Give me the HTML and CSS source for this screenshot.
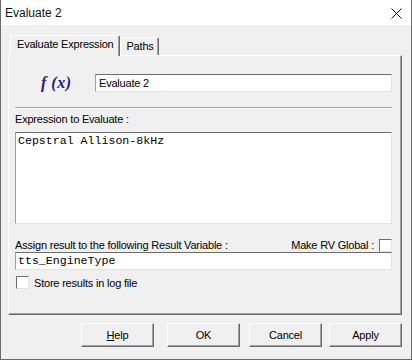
FILE: index.html
```html
<!DOCTYPE html>
<html>
<head>
  <meta charset="utf-8">
  <title>Evaluate 2</title>
  <link rel="stylesheet" href="styles.css">
</head>
<body>
  <div class="window">
    <div class="titlebar">
      <span class="title">Evaluate 2</span>
      <svg class="close" width="11" height="11" viewBox="0 0 11 11">
        <path d="M0.5 0.5 L10.5 10.5 M10.5 0.5 L0.5 10.5" stroke="#111" stroke-width="1" fill="none"/>
      </svg>
    </div>
    <div class="content">
      <div class="tabs">
        <div class="tab active">Evaluate Expression</div>
        <div class="tab">Paths</div>
      </div>
      <div class="panel">
        <div class="name-row">
          <span class="fx">f (x)</span>
          <div class="field name-field">Evaluate 2</div>
        </div>
        <div class="separator"></div>
        <div class="label">Expression to Evaluate :</div>
        <div class="field mono expr">Cepstral Allison-8kHz</div>
        <div class="label-row">
          <span class="label">Assign result to the following Result Variable :</span>
          <span class="global">Make RV Global : <span class="check"></span></span>
        </div>
        <div class="field mono var">tts_EngineType</div>
        <div class="store">
          <span class="check"></span>
          <span class="label">Store results in log file</span>
        </div>
      </div>
      <div class="buttons">
        <div class="button help"><u>H</u>elp</div>
        <div class="button ok">OK</div>
        <div class="button cancel">Cancel</div>
        <div class="button apply">Apply</div>
      </div>
    </div>
  </div>
</body>
</html>
```

FILE: styles.css
```css
body {
    margin: 0;
    background-color: #f0f0f0;
    font-family: "Liberation Sans", Arial, sans-serif;
    font-size: 11px;
    letter-spacing: -0.2px;
    color: #000;
}
.window {
    width: 412px;
    height: 360px;
    box-sizing: border-box;
    border: 1px solid #6a6a6a;
    border-top: none;
    background-color: #f0f0f0;
}
.titlebar {
    height: 25px;
    background-color: #fff;
    display: flex;
    align-items: center;
    justify-content: space-between;
    padding: 0 9px 0 4px;
}
.title {
    font-size: 12px;
    letter-spacing: 0;
    color: #111;
}
.close { margin-top: 1px; }
.content {
    padding: 9px 9px 0 7px;
}
.tabs {
    display: flex;
    align-items: flex-end;
    padding-left: 2px;
    height: 21px;
    position: relative;
    z-index: 1;
}
.tab {
    height: 17px;
    padding: 0 4px 0 5px;
    border-top: 1px solid #fff;
    border-left: 1px solid #fff;
    border-right: 1px solid #6a6a6a;
    box-shadow: inset -1px 0 #a0a0a0;
    border-radius: 2px 2px 0 0;
    line-height: 17px;
    background-color: #f0f0f0;
}
.tab.active {
    height: 20px;
    padding: 0 6px 0 6px;
    line-height: 17px;
    margin-bottom: -1px;
}
.panel {
    height: 260px;
    box-sizing: border-box;
    border-top: 1px solid #fff;
    border-left: 1px solid #fff;
    border-right: 1px solid #6a6a6a;
    border-bottom: 1px solid #6a6a6a;
    box-shadow: inset -1px -1px #a0a0a0;
    padding: 18px 9px 0 6px;
    display: flex;
    flex-direction: column;
}
.name-row {
    display: flex;
    align-items: center;
    height: 18px;
}
.fx {
    font-family: "Liberation Serif", "Times New Roman", serif;
    font-weight: bold;
    font-style: italic;
    font-size: 16px;
    color: #20207a;
    width: 80px;
    padding-left: 26px;
    box-sizing: border-box;
    letter-spacing: 0.5px;
}
.field {
    background-color: #fff;
    border-top: 1px solid #6d6d6d;
    border-left: 1px solid #a0a0a0;
    border-right: 1px solid #e3e3e3;
    border-bottom: 1px solid #e3e3e3;
    box-sizing: border-box;
}
.name-field {
    flex: 1;
    height: 18px;
    line-height: 16px;
    padding-left: 3px;
}
.separator {
    margin-top: 15px;
    height: 1px;
    background-color: #a0a0a0;
    border-bottom: 1px solid #fff;
}
.label {
    white-space: nowrap;
}
.panel > .label {
    margin-top: 4px;
    line-height: 13px;
}
.mono {
    font-family: "Liberation Mono", "Courier New", monospace;
    font-size: 11.6px;
    letter-spacing: 0;
    color: #000;
    padding-left: 2px;
}
.expr {
    margin-top: 6px;
    height: 92px;
    line-height: 16px;
}
.label-row {
    margin-top: 14px;
    display: flex;
    justify-content: space-between;
    align-items: center;
    height: 14px;
}
.global {
    display: flex;
    align-items: center;
    gap: 5px;
}
.check {
    display: inline-block;
    width: 13px;
    height: 13px;
    box-sizing: border-box;
    background-color: #fff;
    border-top: 1px solid #6d6d6d;
    border-left: 1px solid #6d6d6d;
    border-right: 1px solid #e3e3e3;
    border-bottom: 1px solid #e3e3e3;
}
.var {
    height: 18px;
    line-height: 16px;
}
.store {
    margin-top: 6px;
    display: flex;
    align-items: center;
    gap: 5px;
    padding-left: 1px;
}
.buttons {
    display: flex;
    margin-top: 8px;
    padding-left: 73px;
}
.button {
    width: 73px;
    height: 24px;
    box-sizing: border-box;
    border-top: 1px solid #fff;
    border-left: 1px solid #fff;
    border-right: 1px solid #6a6a6a;
    border-bottom: 1px solid #6a6a6a;
    box-shadow: inset -1px -1px #a0a0a0;
    text-align: center;
    line-height: 22px;
    font-size: 11px;
}
.ok { margin-left: 13px; }
.cancel { margin-left: 9px; }
.apply { margin-left: 7px; }
```
